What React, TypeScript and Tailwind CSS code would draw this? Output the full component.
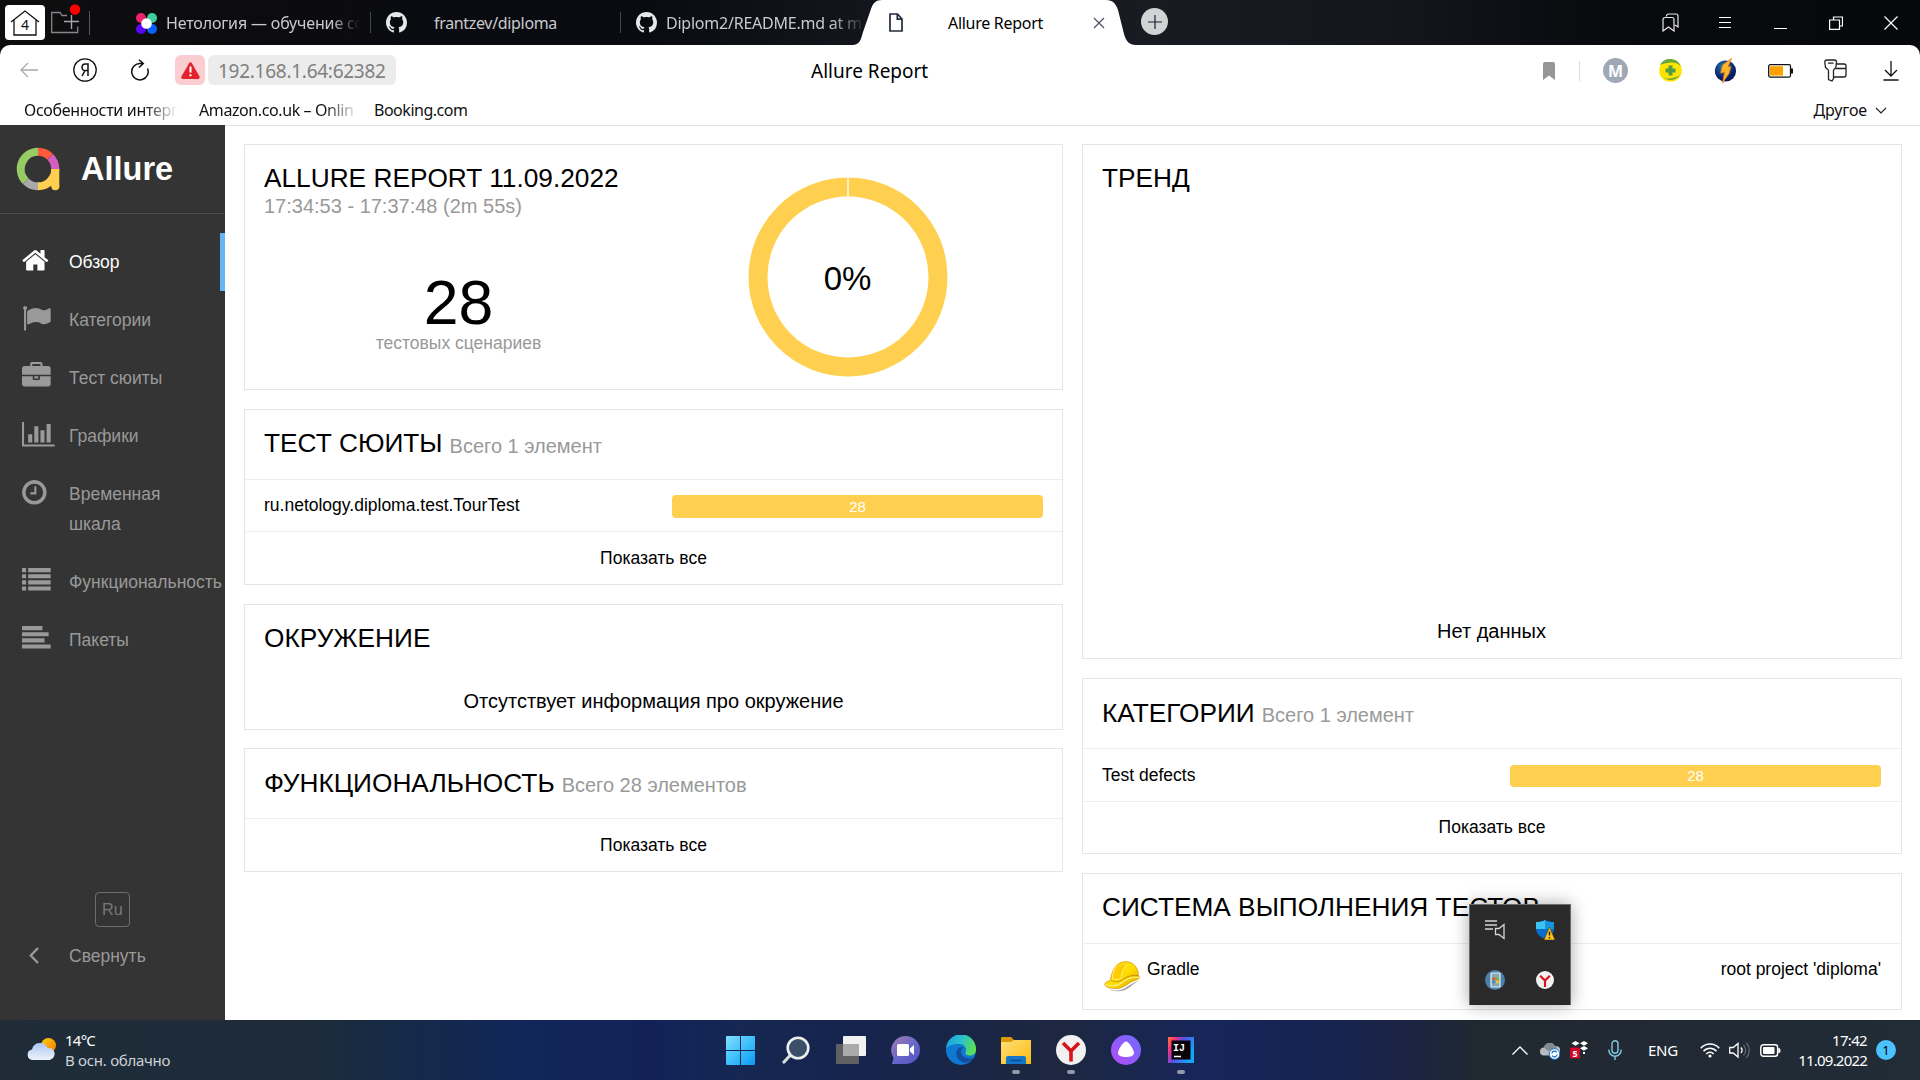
import React, { type ReactNode } from "react";

/* ---------- Browser chrome ---------- */

function GithubMark() {
  return (
    <svg width="21" height="21" viewBox="0 0 16 16" fill="#e6e7e8" className="shrink-0">
      <path d="M8 0C3.58 0 0 3.58 0 8c0 3.54 2.29 6.53 5.47 7.59.4.07.55-.17.55-.38 0-.19-.01-.82-.01-1.49-2.01.37-2.53-.49-2.69-.94-.09-.23-.48-.94-.82-1.13-.28-.15-.68-.52-.01-.53.63-.01 1.08.58 1.23.82.72 1.21 1.87.87 2.33.66.07-.52.28-.87.51-1.07-1.78-.2-3.64-.89-3.64-3.95 0-.87.31-1.59.82-2.15-.08-.2-.36-1.02.08-2.12 0 0 .67-.21 2.2.82.64-.18 1.32-.27 2-.27s1.36.09 2 .27c1.53-1.04 2.2-.82 2.2-.82.44 1.1.16 1.92.08 2.12.51.56.82 1.27.82 2.15 0 3.07-1.87 3.75-3.65 3.95.29.25.54.73.54 1.48 0 1.07-.01 1.93-.01 2.2 0 .21.15.46.55.38A8.01 8.01 0 0 0 16 8c0-4.42-3.58-8-8-8z" />
    </svg>
  );
}

function TabDivider({ className }: { className: string }) {
  return <span className={"h-[21px] w-px shrink-0 bg-[#45474c] " + className} />;
}

function TabBar() {
  return (
    <div className="flex h-[45px] items-center bg-[linear-gradient(90deg,#0e0d0e_0px,#0a0b10_420px,#090b11_640px,#12151b_860px,#181b22_1150px,#14161c_1400px,#090a0e_1600px,#07080b_1920px)] font-['Noto_Sans',sans-serif] text-[16px] leading-[22px] text-[#c9cacc]">
      <div className="ml-[5px] flex h-[35px] w-10 shrink-0 items-center justify-center rounded bg-white">
        <svg width="30" height="26" viewBox="0 0 30 26" fill="none" stroke="#111" strokeWidth="1.3">
          <path d="M1 12 15 1l14 11M4 10v15h22V10" />
          <text x="15" y="19.5" textAnchor="middle" fontSize="14" fill="#111" stroke="none">4</text>
        </svg>
      </div>
      <svg width="30" height="36" viewBox="0 0 30 36" fill="none" className="-mt-px ml-[6px] shrink-0">
        <path d="M16 11.500H11L9 8.500H.7v20h26v-6" stroke="#85868a" strokeWidth="1.3" />
        <path d="M13 17.500h15M20.500 11v14" stroke="#a6a7aa" strokeWidth="1.4" />
        <circle cx="24" cy="5.500" r="5.200" fill="#fe0000" />
      </svg>
      <span className="ml-[8px] h-6 w-px shrink-0 bg-[#56575c]" />

      <svg width="21" height="21" viewBox="0 0 21 21" className="ml-[46px] mt-px shrink-0">
        <circle cx="5" cy="5" r="5" fill="#e8236f" />
        <circle cx="16" cy="5" r="5" fill="#3ecf9a" />
        <circle cx="5" cy="16" r="5" fill="#5a06f5" />
        <circle cx="16" cy="16" r="5" fill="#0a62fc" />
        <circle cx="10.500" cy="10.500" r="5.300" fill="#fff" />
      </svg>
      <div className="ml-[9px] w-[194px] shrink-0 overflow-hidden whitespace-nowrap tracking-[-0.16px] [mask-image:linear-gradient(90deg,#000_165px,transparent)]">
        Нетология — обучение со
      </div>
      <TabDivider className="ml-[10px]" />
      <div className="ml-[15px] flex w-[234px] shrink-0 items-center">
        <GithubMark />
        <span className="ml-[27px] tracking-[-0.33px]">frantzev/diploma</span>
      </div>
      <TabDivider className="" />
      <div className="ml-[15px] flex w-[216px] shrink-0 items-center">
        <GithubMark />
        <span className="ml-[9px] w-[196px] shrink-0 overflow-hidden whitespace-nowrap tracking-[-0.23px] [mask-image:linear-gradient(90deg,#000_165px,transparent_200px)]">
          Diplom2/README.md at m
        </span>
      </div>

      <div className="relative flex h-[45px] w-[287px] shrink-0 items-center text-black">
        <svg width="287" height="45" viewBox="0 0 287 45" className="absolute inset-0">
          <path d="M0 45C8 45 9 39 11 32L19 9C21 3 24 0 30 0H254C261 0 264 4 266 10L272 34C274 41 277 45 284 45Z" fill="#fff" />
        </svg>
        <svg width="14" height="19" viewBox="0 0 14 19" fill="none" stroke="#222c3f" strokeWidth="1.700" className="relative ml-[37px] shrink-0">
          <path d="M1 1h7.500L13 6v12H1zM8.300 1v5.200H13" />
        </svg>
        <span className="relative ml-[45px] mt-px w-[95px] whitespace-nowrap tracking-[-0.29px]">Allure Report</span>
        <svg width="12" height="12" viewBox="0 0 12 12" stroke="#4a5160" strokeWidth="1.200" className="relative ml-[50px] mt-px">
          <path d="m1 1 10 10M11 1 1 11" />
        </svg>
      </div>
      <div className="-mt-[2px] ml-[2px] flex size-[27px] shrink-0 items-center justify-center rounded-full bg-[#d2d3d5]">
        <svg width="14" height="14" viewBox="0 0 14 14" stroke="#1c2030" strokeWidth="1.200">
          <path d="M7 0v14M0 7h14" />
        </svg>
      </div>

      <div className="ml-auto flex items-center pr-[22px]">
        <svg width="17" height="19" viewBox="0 0 17 19" fill="none" stroke="#e8e8ea" strokeWidth="1.200">
          <path d="M4.500 3.500V3a2 2 0 0 1 2-2H14a2 2 0 0 1 2 2v11l-3-2M1 18V6.500a2 2 0 0 1 2-2h7a2 2 0 0 1 2 2V18l-5.500-4z" />
        </svg>
        <svg width="12" height="13" viewBox="0 0 12 13" stroke="#fff" strokeWidth="1" className="ml-[40px]">
          <path d="M0 1.500h12M0 6.500h12M0 11.500h12" />
        </svg>
        <svg width="13" height="13" viewBox="0 0 13 13" stroke="#fff" strokeWidth="1" className="ml-[43px]">
          <path d="M0 12.500h13" />
        </svg>
        <svg width="14" height="14" viewBox="0 0 14 14" fill="none" stroke="#fff" strokeWidth="1.200" className="ml-[42px]">
          <path d="M4.500 4V1h9v9h-3M.6 4h9.900v9.400H.6z" />
        </svg>
        <svg width="14" height="14" viewBox="0 0 14 14" stroke="#fff" strokeWidth="1.200" className="ml-[41px]">
          <path d="m.5.5 13 13M13.500.5l-13 13" />
        </svg>
      </div>
    </div>
  );
}

function Toolbar() {
  return (
    <div className="grid h-[50px] grid-cols-[811px_1fr_auto] items-center rounded-t-[10px] bg-white font-['Noto_Sans',sans-serif] text-[19px] leading-[26px]">
      <div className="flex items-center">
        <svg width="18" height="16" viewBox="0 0 18 16" fill="none" stroke="#a9a9a9" strokeWidth="1.300" className="ml-[20px]">
          <path d="M18 8H1.500M8 1 1 8l7 7" />
        </svg>
        <svg width="24" height="24" viewBox="0 0 24 24" fill="none" stroke="#111" strokeWidth="1.300" className="ml-[35px]">
          <circle cx="12" cy="12" r="11.200" />
          <path d="M15 18V6h-2.500a3.300 3.300 0 0 0-.3 6.600H15M12 12.600 9 18" strokeWidth="1.500" />
        </svg>
        <svg width="19" height="22" viewBox="0 0 19 22" fill="none" stroke="#111" strokeWidth="1.500" className="ml-[33px]">
          <path d="M17.500 9.500A8.200 8.200 0 1 1 9.500 4.500h3M9 .8l4.300 3.700L9 8.500" />
        </svg>
        <div className="ml-[26px] flex h-[30px] w-[30px] items-center justify-center rounded-md bg-[#fbcdd0]">
          <svg width="19" height="17" viewBox="0 0 19 17">
            <path d="M8.200 1a1.500 1.500 0 0 1 2.600 0l7.600 13.300A1.700 1.700 0 0 1 17 17H2a1.700 1.700 0 0 1-1.400-2.700z" fill="#e2222d" />
            <path d="M9.500 4.500v6M9.500 12.200v2" stroke="#fff" strokeWidth="2" />
          </svg>
        </div>
        <div className="ml-[3px] flex h-[30px] w-[188px] items-center rounded-md bg-[#ececec] pl-[10px] pt-px tracking-[-0.27px] text-[#7f7f7f]">
          192.168.1.64:62382
        </div>
      </div>
      <div className="mt-px text-black">Allure Report</div>
      <div className="mt-px flex items-center pr-[21px]">
        <svg width="12" height="18" viewBox="0 0 12 18" className="mr-[24px]">
          <path d="M0 2a2 2 0 0 1 2-2h8a2 2 0 0 1 2 2v16l-6-4.500L0 18z" fill="#969696" />
        </svg>
        <span className="h-5 w-px bg-[#dcdcdc]" />
        <span className="ml-[23px] flex size-[25px] items-center justify-center rounded-full bg-[#9fa9b6] text-[16px] font-bold leading-none text-white">M</span>
        <svg width="23" height="23" viewBox="0 0 23 23" className="ml-[31px]">
          <circle cx="11.500" cy="11.500" r="11.300" fill="#ffe500" />
          <path d="M1 6A11.500 11.500 0 0 1 22 8C18 2 9 3 1 6ZM3 17c4 4 12 3 18-1A11.300 11.300 0 0 1 3 17Z" fill="#6aa83f" />
          <path d="M11.500 6.500v10M6.500 11.500h10" stroke="#4f9d44" strokeWidth="4" />
        </svg>
        <svg width="23" height="26" viewBox="0 0 23 26" className="ml-[32px]">
          <defs>
            <radialGradient id="boltBg" cx=".4" cy=".3" r=".8">
              <stop offset="0" stopColor="#1f7fb5" />
              <stop offset=".6" stopColor="#0a2670" />
              <stop offset="1" stopColor="#04104a" />
            </radialGradient>
          </defs>
          <circle cx="11.500" cy="13" r="10.600" fill="url(#boltBg)" />
          <path d="M17.500.5 8.500 7 6.500 15l4-.5L8.500 25l6.500-9.500 2-7-3 .5z" fill="#ffb52b" stroke="#e07a1c" strokeWidth=".8" />
        </svg>
        <svg width="25" height="14" viewBox="0 0 25 14" className="ml-[31px]">
          <rect x=".7" y=".7" width="21.800" height="12.400" rx="1.500" fill="#fff" stroke="#111" strokeWidth="1.300" />
          <rect x="2" y="2.200" width="13" height="9.400" fill="#ffa100" />
          <rect x="22.700" y="4.500" width="2.300" height="5" fill="#111" />
        </svg>
        <svg width="23" height="23" viewBox="0 0 23 23" fill="none" stroke="#222" strokeWidth="1.300" className="-mt-px ml-[31px]">
          <path d="M2.500 1h8a2 2 0 0 1 2 2l-.6 5c-.2 1.500-2.400 2-2.400 3.500v8L8 22l-3.500-1.500v-9C4.500 10 1.700 9.500 1.400 8L.8 3a2 2 0 0 1 1.700-2zM4 4.200h5.500" />
          <path d="M12.500 5H20a2 2 0 0 1 2 2v9a2 2 0 0 1-2 2H9.800M11.500 9.500H22" />
        </svg>
        <svg width="16" height="20" viewBox="0 0 16 20" fill="none" stroke="#111" strokeWidth="1.300" className="ml-[36px]">
          <path d="M8 0v15M2 9l6 6 6-6M.5 19h15" />
        </svg>
      </div>
    </div>
  );
}

function BookmarkBar() {
  return (
    <div className="flex h-[31px] items-center border-b border-[#e2e2e2] bg-white font-['Noto_Sans',sans-serif] text-[16px] leading-[22px] text-[#111]">
      <span className="ml-[24px] w-[154px] overflow-hidden whitespace-nowrap tracking-[-0.29px] [mask-image:linear-gradient(90deg,#000_120px,transparent)]">
        Особенности интерп
      </span>
      <span className="ml-[21px] w-[158px] overflow-hidden whitespace-nowrap tracking-[-0.4px] [mask-image:linear-gradient(90deg,#000_125px,transparent_160px)]">
        Amazon.co.uk – Onlin
      </span>
      <span className="ml-[17px] tracking-[-0.48px]">Booking.com</span>
      <span className="ml-auto tracking-[-0.12px]">Другое</span>
      <svg width="12" height="7" viewBox="0 0 12 7" fill="none" stroke="#222" strokeWidth="1.200" className="ml-[8px] mr-[33px]">
        <path d="m1 1 5 5 5-5" />
      </svg>
    </div>
  );
}

/* ---------- Sidebar ---------- */

const icons: Record<string, { d: string; w: number; ml: string }> = {
  home: {
    w: 1792,
    ml: "ml-[21px]",
    d: "M1472 992v480q0 26-19 45t-45 19h-384v-384h-256v384h-384q-26 0-45-19t-19-45v-480q0-1 .5-3t.5-3l575-474 575 474q1 2 1 6zm223-69l-62 74q-8 9-21 11h-3q-13 0-21-7l-692-577-692 577q-12 8-24 7-13-2-21-11l-62-74q-8-10-7-23.5t11-21.500l719-599q32-26 76-26t76 26l244 204v-195q0-14 9-23t23-9h192q14 0 23 9t9 23v408l219 182q10 8 11 21.500t-7 23.500z",
  },
  flag: {
    w: 1792,
    ml: "ml-[22px]",
    d: "M320 256q0 72-64 110v1266q0 13-9.500 22.500t-22.500 9.500h-64q-13 0-22.500-9.500t-9.500-22.500v-1266q-64-38-64-110 0-53 37.500-90.500t90.500-37.500 90.500 37.500 37.500 90.500zm1472 64v763q0 25-12.500 38.500t-39.500 27.500q-215 116-369 116-61 0-123.500-22t-108.500-48-115.500-48-142.500-22q-192 0-464 146-17 9-33 9-26 0-45-19t-19-45v-742q0-32 31-55 21-14 79-43 236-120 421-120 107 0 200 29t219 88q38 19 88 19 54 0 117.500-21t110-47 88-47 54.500-21q26 0 45 19t19 45z",
  },
  briefcase: {
    w: 1792,
    ml: "ml-[22px]",
    d: "M640 256h512v-128h-512v128zm1152 640v480q0 66-47 113t-113 47h-1472q-66 0-113-47t-47-113v-480h672v160q0 26 19 45t45 19h320q26 0 45-19t19-45v-160h672zm-768 0v128h-256v-128h256zm768-480v384h-1792v-384q0-66 47-113t113-47h352v-160q0-40 28-68t68-28h576q40 0 68 28t28 68v160h352q66 0 113 47t47 113z",
  },
  chart: {
    w: 2048,
    ml: "ml-[22px]",
    d: "M640 896v512h-256v-512h256zm384-512v1024h-256v-1024h256zm1024 1152v128h-2048v-1536h128v1408h1920zm-640-896v768h-256v-768h256zm384-384v1152h-256v-1152h256z",
  },
  clock: {
    w: 1792,
    ml: "ml-[20px]",
    d: "M1024 544v448q0 14-9 23t-23 9h-320q-14 0-23-9t-9-23v-64q0-14 9-23t23-9h224v-352q0-14 9-23t23-9h64q14 0 23 9t9 23zm416 352q0-148-73-273t-198-198-273-73-273 73-198 198-73 273 73 273 198 198 273 73 273-73 198-198 73-273zm224 0q0 209-103 385.500t-279.500 279.500-385.500 103-385.500-103-279.500-279.500-103-385.500 103-385.500 279.500-279.500 385.500-103 385.500 103 279.500 279.500 103 385.500z",
  },
  list: {
    w: 1792,
    ml: "ml-[22px]",
    d: "M0 128h256v256H0zM384 128h1408v256H384zM0 512h256v256H0zM384 512h1408v256H384zM0 896h256v256H0zM384 896h1408v256H384zM0 1280h256v256H0zM384 1280h1408v256H384z",
  },
  align: {
    w: 1792,
    ml: "ml-[22px]",
    d: "M0 128h1280v256H0zM0 512h1664v256H0zM0 896h1408v256H0zM0 1280h1792v256H0z",
  },
};

function NavItem({ icon, active, children }: { icon: string; active?: boolean; children: ReactNode }) {
  const g = icons[icon];
  return (
    <div className={"flex items-start " + (active ? "border-r-[5px] border-[#64b5f6] text-white" : "text-[#999]")}>
      <span className="flex w-[69px] shrink-0 pt-[13px]">
        <svg width={g.w * 0.016} height="28.670" viewBox={`0 0 ${g.w} 1792`} fill="currentColor" className={g.ml}>
          <path d={g.d} />
        </svg>
      </span>
      <span className="py-[14px] text-[17.5px] leading-[30px]">{children}</span>
    </div>
  );
}

function Sidebar() {
  return (
    <aside className="flex w-[225px] shrink-0 flex-col bg-[#343434] font-['Liberation_Sans',sans-serif]">
      <div className="flex h-[89px] items-start border-b border-[#4d4d4d]">
        <svg width="46" height="46" viewBox="0 0 46 46" fill="none" strokeWidth="8" className="ml-[15px] mt-[21px]">
          <path d="M23 5.700A17.300 17.300 0 0 0 10.800 35.200" stroke="#97cc64" />
          <path d="M10.800 35.200A17.300 17.300 0 0 0 23 40.300" stroke="#aaa" />
          <path d="M23 40.300A17.300 17.300 0 0 0 40.300 23" stroke="#ffd050" />
          <path d="M23 5.700A17.300 17.300 0 0 1 35.200 10.800" stroke="#fd5a3e" />
          <path d="M35.200 10.800A17.300 17.300 0 0 1 40.300 23" stroke="#d35ebe" />
          <path d="M40.300 23v17.500" stroke="#ffd050" />
          <circle cx="40.300" cy="40.300" r="4" fill="#ffd050" stroke="none" />
        </svg>
        <span className="ml-[20px] mt-[24px] text-[32.5px] font-bold leading-[40px] text-white">Allure</span>
      </div>
      <nav className="mt-[19px] flex flex-col">
        <NavItem icon="home" active>Обзор</NavItem>
        <NavItem icon="flag">Категории</NavItem>
        <NavItem icon="briefcase">Тест сюиты</NavItem>
        <NavItem icon="chart">Графики</NavItem>
        <NavItem icon="clock">Временная<br />шкала</NavItem>
        <NavItem icon="list">Функциональность</NavItem>
        <NavItem icon="align">Пакеты</NavItem>
      </nav>
      <div className="mt-auto flex flex-col pb-[49px]">
        <span className="flex h-[35px] w-[35px] items-center justify-center self-center rounded-[4px] border border-[#6e6e6e] text-[16.250px] text-[#777]">Ru</span>
        <div className="mt-[14px] flex h-[30px] items-center text-[17.5px] leading-[30px] text-[#999]">
          <svg width="10" height="17" viewBox="0 0 10 17" fill="none" stroke="currentColor" strokeWidth="2.400" className="-mt-[2px] ml-[29px] mr-[30px]">
            <path d="M9 1 1.800 8.500 9 16" />
          </svg>
          Свернуть
        </div>
      </div>
    </aside>
  );
}

/* ---------- Widgets ---------- */

function Card({ className, children }: { className: string; children: ReactNode }) {
  return <section className={"flex flex-col border border-[#e5e5e5] bg-white " + className}>{children}</section>;
}

function Title({ sub, low, children }: { sub?: string; low?: boolean; children: string }) {
  return (
    <h2 className={"flex h-[69px] shrink-0 items-start whitespace-nowrap px-[19px] text-[26.250px] leading-[30px] " + (low ? "pt-[19px]" : "pt-[18px]")}>
      <span>{children}</span>
      {sub && <small className={"ml-[7px] text-[20px] leading-[30px] text-[#999] " + (low ? "pt-[2px]" : "pt-[3px]")}>{sub}</small>}
    </h2>
  );
}

function BarRow({ name, value, low }: { name: string; value: number; low?: boolean }) {
  return (
    <div className={"flex items-start justify-between border-t border-[#eceff1] px-[19px] " + (low ? "h-[53px] pt-px" : "h-[52px]")}>
      <span className="mt-[10px] text-[17.5px] leading-[30px]">{name}</span>
      <span className={"mt-[15px] flex w-[371px] items-center justify-center rounded-[4px] bg-[#ffd050] text-[15px] leading-[22px] text-white " + (low ? "h-[22px]" : "h-[23px]")}>
        {value}
      </span>
    </div>
  );
}

function ShowAll({ className }: { className: string }) {
  return <div className={"flex-1 border-t border-[#eceff1] text-center text-[17.5px] leading-[30px] " + className}>Показать все</div>;
}

function LeftColumn() {
  return (
    <div className="flex w-[819px] flex-col gap-[19px]">
      <Card className="h-[246px]">
        <div className="flex h-full">
          <div className="flex w-[408px] flex-col">
            <h2 className="whitespace-nowrap pl-[19px] pt-[18px] text-[26.250px] leading-[30px]">ALLURE REPORT 11.09.2022</h2>
            <div className="mt-px pl-[19px] text-[20px] leading-[24px] text-[#999]">17:34:53 - 17:37:48 (2m 55s)</div>
            <div className="mt-[56px] pl-[19px] text-center text-[62.5px] leading-[56px]">28</div>
            <div className="mt-px pl-[19px] text-center text-[17.5px] leading-[24px] text-[#999]">тестовых сценариев</div>
          </div>
          <svg width="200" height="200" viewBox="0 0 200 200" className="ml-[95px] mt-[32px]">
            <circle cx="100" cy="100" r="90" fill="none" stroke="#ffd050" strokeWidth="19" />
            <path d="M100 0v20.500" stroke="#fff" strokeWidth="1.300" />
            <text x="99.500" y="113" textAnchor="middle" fontSize="33">0%</text>
          </svg>
        </div>
      </Card>
      <Card className="h-[176px]">
        <Title sub="Всего 1 элемент">ТЕСТ СЮИТЫ</Title>
        <BarRow name="ru.netology.diploma.test.TourTest" value={28} />
        <ShowAll className="pt-[11px]" />
      </Card>
      <Card className="h-[126px]">
        <Title>ОКРУЖЕНИЕ</Title>
        <div className="pt-[12px] text-center text-[20px] leading-[30px]">Отсутствует информация про окружение</div>
      </Card>
      <Card className="-mt-px h-[124px]">
        <Title low sub="Всего 28 элементов">ФУНКЦИОНАЛЬНОСТЬ</Title>
        <ShowAll className="pt-[11px]" />
      </Card>
    </div>
  );
}

function Helmet() {
  return (
    <svg width="38" height="32" viewBox="0 0 38 32" className="shrink-0">
      <defs>
        <linearGradient id="hat" x1="0" y1="0" x2="1" y2="1">
          <stop offset="0" stopColor="#ffd428" />
          <stop offset=".5" stopColor="#ffe000" />
          <stop offset="1" stopColor="#e29e00" />
        </linearGradient>
      </defs>
      <path d="M4 27c6 4 14 3 20-2l11-6-9 7c-6 5-16 6-22 1z" fill="#8d8d8d" opacity=".8" />
      <path d="M.8 23C1.500 20.500 5 21 6.500 18.500 8 10 11.500 3 18 1.200 26-.8 32 3 34 11c.4 2 .3 4 1.500 5.500-.3 2-4 2-9.500 5C21 25 17 28 11 27.500 6 27 .5 26 .8 23z" fill="url(#hat)" stroke="#d59a00" strokeWidth=".8" />
      <path d="M1.500 23.500C7 25.500 13 25.500 18 21.500c5-4 10-6 17-5" fill="none" stroke="#fff07a" strokeWidth="1.300" />
      <path d="M13 5c-3.500 4-4.500 8-4.500 12.500 3 1.500 6 1.500 9-.5 0-5 1.500-10 6-13.500" fill="#ffc400" fillOpacity=".7" stroke="#fff07a" strokeWidth="1" />
      <path d="M7 19.500c5 2 9 1 13-1.800 4-2.700 8-3.700 14-3.200" fill="none" stroke="#c98b00" strokeWidth=".9" />
    </svg>
  );
}

function RightColumn() {
  return (
    <div className="flex w-[820px] flex-col gap-[19px]">
      <Card className="h-[515px]">
        <Title>ТРЕНД</Title>
        <div className="mt-auto pb-[12px] pr-px text-center text-[20px] leading-[30px]">Нет данных</div>
      </Card>
      <Card className="h-[176px]">
        <Title low sub="Всего 1 элемент">КАТЕГОРИИ</Title>
        <div className="pr-px">
          <BarRow low name="Test defects" value={28} />
        </div>
        <ShowAll className="pt-[10px]" />
      </Card>
      <Card className="h-[137px]">
        <Title>СИСТЕМА ВЫПОЛНЕНИЯ ТЕСТОВ</Title>
        <div className="flex flex-1 items-start border-t border-[#eceff1] pl-[19px] pr-[20px] pt-[10px] text-[17.5px] leading-[30px]">
          <div className="ml-[2px] mt-[7px]">
            <Helmet />
          </div>
          <span className="ml-[5px]">Gradle</span>
          <span className="ml-auto">root project 'diploma'</span>
        </div>
      </Card>
    </div>
  );
}

/* ---------- Desktop ---------- */

function YandexY({ size }: { size: number }) {
  return (
    <svg width={size} height={size} viewBox="0 0 30 30">
      <circle cx="15" cy="15" r="15" fill="#f1f1f2" />
      <path d="M7 8l8 8 8-8M15 15.500V26.500" fill="none" stroke="#d8131b" strokeWidth="3.600" />
    </svg>
  );
}

function TrayPopup() {
  return (
    <div className="absolute left-[1469px] top-[904px] grid h-[101px] w-[102px] grid-cols-2 grid-rows-2 place-items-center border border-[#6b6b6b] border-b-0 bg-[#2a2a2a] shadow-[0_0_16px_rgba(0,0,0,0.35)]">
      <svg width="20" height="20" viewBox="0 0 20 20" fill="none" stroke="#d5d5d5" strokeWidth="1.300">
        <path d="M0 1h12M0 5h12M0 9h8M10.500 8.500h3.500l5-4v14l-5-4h-3.500z" />
      </svg>
      <svg width="20" height="20" viewBox="0 0 20 20">
        <path d="M10 0c2 1.500 5 2 9 2v6c0 6-4 9-9 11-5-2-9-5-9-11V2c4 0 7-.5 9-2z" fill="#0a6cc9" />
        <path d="M10 0v9H1V2c4 0 7-.5 9-2z" fill="#3cc4f5" />
        <path d="M10 0v9h9V2c-4 0-7-.5-9-2z" fill="#1793e0" />
        <path d="M14.500 7 20 20H9z" fill="#ffc21a" stroke="#3a2c00" strokeWidth=".5" />
        <path d="M14.500 11.500v4M14.500 17v1.500" stroke="#222" strokeWidth="1.400" />
      </svg>
      <svg width="20" height="20" viewBox="0 0 20 20">
        <circle cx="10" cy="10" r="10" fill="#4c80a8" />
        <rect x="6" y="3" width="9" height="14" rx="1" fill="#85a9b8" stroke="#e8f0f2" strokeWidth="1.200" />
        <path d="M7.300 7.500h3v2.700h-3z" fill="#e8502a" />
        <path d="M10.700 7.500h3v2.700h-3z" fill="#7ab51d" />
        <path d="M7.300 10.600h3v2.700h-3z" fill="#2a8fe0" />
        <path d="M10.700 10.600h3v2.700h-3z" fill="#ffbf1a" />
      </svg>
      <YandexY size={18} />
    </div>
  );
}

function AppButton({ open, children }: { open?: boolean; children: ReactNode }) {
  return (
    <div className="flex h-[60px] w-[55px] flex-col items-center">
      <div className="mt-[15px] flex h-[30px] items-center">{children}</div>
      {open && <span className="mt-[5px] h-1 w-2 rounded-full bg-[#9499a8]" />}
    </div>
  );
}

function Taskbar() {
  return (
    <div className="grid h-[60px] grid-cols-[713px_495px_1fr] bg-[linear-gradient(90deg,#1f2c38_0px,#1e2c3a_310px,#152a47_400px,#12265a_520px,#122259_650px,#152752_740px,#16244d_860px,#1d2740_1060px,#16265a_1210px,#162350_1330px,#1c2440_1420px,#20292f_1480px,#222934_1620px,#202c36_1920px)] font-['Noto_Sans',sans-serif] text-[15px] leading-5 text-white">
      <div className="flex items-center">
        <svg width="30" height="24" viewBox="0 0 30 24" className="-mt-[3px] ml-[27px]">
          <defs>
            <linearGradient id="sun" x1="0" y1="0" x2="1" y2="1">
              <stop offset="0" stopColor="#ffcf10" />
              <stop offset="1" stopColor="#f07800" />
            </linearGradient>
            <linearGradient id="cloud" x1="0" y1="0" x2="0" y2="1">
              <stop offset="0" stopColor="#a9c8f5" />
              <stop offset="1" stopColor="#edf2f8" />
            </linearGradient>
          </defs>
          <circle cx="21.500" cy="8.500" r="7.500" fill="url(#sun)" />
          <path d="M5.500 23a5.300 5.300 0 0 1-.5-10.500A8.300 8.300 0 0 1 20.700 11 6 6 0 1 1 22.500 23z" fill="url(#cloud)" />
        </svg>
        <div className="ml-[8px] flex flex-col">
          <span className="tracking-[-0.75px]">14°C</span>
          <span className="tracking-[-0.28px] text-[#cdd2d7]">В осн. облачно</span>
        </div>
      </div>

      <div className="flex">
        <AppButton>
          <svg width="29" height="29" viewBox="0 0 29 29">
            <defs>
              <linearGradient id="win" x1="0" y1="0" x2="1" y2="1">
                <stop offset="0" stopColor="#84e0fd" />
                <stop offset=".5" stopColor="#3fc0fb" />
                <stop offset="1" stopColor="#0c9af5" />
              </linearGradient>
            </defs>
            <path d="M0 1q0-1 1-1h13v14H0zM15 0h13q1 0 1 1v13H15zM0 15h14v14H1q-1 0-1-1zM15 15h14v13q0 1-1 1H15z" fill="url(#win)" />
          </svg>
        </AppButton>
        <AppButton>
          <svg width="28" height="28" viewBox="0 0 28 28">
            <path d="m2 26 7-7.500" stroke="#d9dcdf" strokeWidth="3.200" strokeLinecap="round" />
            <circle cx="16" cy="12" r="10.300" fill="#3d4e69" stroke="#eceeef" strokeWidth="2.600" />
          </svg>
        </AppButton>
        <AppButton>
          <svg width="30" height="28" viewBox="0 0 30 28">
            <rect x="7" y="0" width="23" height="20" rx="1" fill="#f1f1f1" />
            <rect x="0" y="8" width="23" height="20" rx="1" fill="#5f6062" />
            <path d="M7 8h16v12H7z" fill="#a9aaab" />
          </svg>
        </AppButton>
        <AppButton>
          <svg width="29" height="29" viewBox="0 0 29 29">
            <defs>
              <linearGradient id="chat" x1="0" y1="0" x2="1" y2="1">
                <stop offset="0" stopColor="#a77bb0" />
                <stop offset=".5" stopColor="#6869c9" />
                <stop offset="1" stopColor="#4f50c0" />
              </linearGradient>
            </defs>
            <path d="M14.500 0a14.500 14 0 0 1 0 28H1l1.500-6A14.300 14.300 0 0 1 14.500 0z" fill="url(#chat)" />
            <rect x="6" y="8" width="12" height="12" rx="1.500" fill="#fff" />
            <path d="m19 12.500 4-3.500v10l-4-3.500z" fill="#fff" />
          </svg>
        </AppButton>
        <AppButton>
          <svg width="30" height="30" viewBox="0 0 30 30">
            <defs>
              <linearGradient id="edgeTop" x1="0" y1=".3" x2="1" y2=".6">
                <stop offset="0" stopColor="#1b9fe2" />
                <stop offset=".5" stopColor="#2cc4c4" />
                <stop offset="1" stopColor="#62e04c" />
              </linearGradient>
            </defs>
            <circle cx="15" cy="15" r="15" fill="#0f78d0" />
            <path d="M0 14A15 15 0 0 1 30 14.500c0 4-3 6-6.500 6-3 0-5-1.500-4-3C21 15 20 9 13 9 6 9 1 11 0 14z" fill="url(#edgeTop)" />
            <path d="M12.500 13c-4 4-3 12 5 14.500 4 .8 8-1.500 10.500-5-4 2-13 1-13-6 0-2 1-3 2.500-4-2-.5-4-.5-5 .5z" fill="#124f9e" />
          </svg>
        </AppButton>
        <AppButton open>
          <svg width="30" height="27" viewBox="0 0 30 27">
            <defs>
              <linearGradient id="folder" x1="0" y1="0" x2="1" y2="1">
                <stop offset="0" stopColor="#ffe07a" />
                <stop offset="1" stopColor="#fbb90f" />
              </linearGradient>
            </defs>
            <path d="M0 1q0-1 1-1h9l3 3h0v6H0z" fill="#dc9a06" />
            <path d="M0 5h10l3-2h17v24H0z" fill="url(#folder)" />
            <path d="M5 27v-6q0-2 2-2h16q2 0 2 2v6z" fill="#1476c8" />
            <path d="M9.500 23.500h11" stroke="#0c4f93" strokeWidth="1.500" />
          </svg>
        </AppButton>
        <AppButton open>
          <YandexY size={30} />
        </AppButton>
        <AppButton>
          <svg width="30" height="30" viewBox="0 0 30 30">
            <defs>
              <linearGradient id="alice" x1="1" y1="0" x2="0" y2="1">
                <stop offset="0" stopColor="#6d6bff" />
                <stop offset="1" stopColor="#b34cf8" />
              </linearGradient>
            </defs>
            <circle cx="15" cy="15" r="15" fill="url(#alice)" />
            <path d="M15 6.500c3 0 8 8.500 8 11.500S19 22 15 22s-8-1-8-4 5-11.500 8-11.500z" fill="#fff" />
          </svg>
        </AppButton>
        <AppButton open>
          <svg width="26" height="26" viewBox="0 0 26 26">
            <defs>
              <linearGradient id="idea" x1="0" y1="0" x2="1" y2=".5">
                <stop offset="0" stopColor="#ff7a2c" />
                <stop offset=".25" stopColor="#f5317f" />
                <stop offset=".5" stopColor="#5c4fe8" />
                <stop offset="1" stopColor="#12a6f5" />
              </linearGradient>
            </defs>
            <rect width="26" height="26" fill="url(#idea)" />
            <rect x="3.500" y="3.500" width="19" height="19" fill="#0a0209" />
            <text x="5" y="14" fontSize="10" fontWeight="700" fill="#fff" fontFamily="Liberation Mono">IJ</text>
            <path d="M6 19.500h7" stroke="#fff" strokeWidth="1.500" />
          </svg>
        </AppButton>
      </div>

      <div className="flex items-center justify-end pr-[24px]">
        <svg width="16" height="9" viewBox="0 0 16 9" fill="none" stroke="#fff" strokeWidth="1.300">
          <path d="m.5 8.500 7.500-7.500 7.500 7.500" />
        </svg>
        <svg width="20" height="18" viewBox="0 0 20 18" className="ml-[12px] mt-[2px]">
          <path d="M4 13.500a4 4 0 0 1 0-8 6 6 0 0 1 11-1.500 4.500 4.500 0 0 1 1.500 9.500z" fill="#b9bcbf" />
          <path d="M4 5.500a6 6 0 0 1 11-1.500 4.500 4.500 0 0 1 2 1.500L8 9z" fill="#85898c" />
          <circle cx="14.500" cy="12" r="5.300" fill="#fff" stroke="#1472c9" strokeWidth="1" />
          <path d="M11.800 11.500a2.800 2.800 0 0 1 5-1.200M17.200 12.500a2.800 2.800 0 0 1-5 1.200" fill="none" stroke="#1472c9" strokeWidth="1.300" />
        </svg>
        <svg width="19" height="18" viewBox="0 0 19 18" className="ml-[10px]">
          <path d="m5.500 0 4 2.300-4 2.500-4-2.500zM14 0l4 2.300-4 2.500-4-2.500zM14 5l4 2.300-4 2.500-4-2.500zM13 11h2v2h-2z" fill="#fff" />
          <rect x="0" y="6.500" width="10" height="11" rx="1.500" fill="#d2062a" />
          <text x="5" y="15.500" textAnchor="middle" fontSize="9" fontWeight="700" fill="#fff">5</text>
        </svg>
        <svg width="14" height="20" viewBox="0 0 14 20" fill="none" stroke="#7fcbe0" strokeWidth="1.400" className="ml-[19px]">
          <rect x="4" y=".8" width="6" height="12.500" rx="3" />
          <path d="M.8 9.500c0 9 12.400 9 12.400 0M7 16.200V20" />
        </svg>
        <span className="ml-[26px] tracking-[-0.22px]">ENG</span>
        <svg width="20" height="15" viewBox="0 0 20 15" fill="none" stroke="#fff" strokeWidth="1.400" className="ml-[22px]">
          <path d="M.7 5.300c5-5.700 13.600-5.700 18.600 0M3.500 8.200c3.600-4 9.400-4 13 0M6.300 11c2-2.300 5.400-2.300 7.400 0" />
          <circle cx="10" cy="13" r="1.600" fill="#fff" stroke="none" />
        </svg>
        <svg width="21" height="17" viewBox="0 0 21 17" fill="none" stroke="#fff" strokeWidth="1.300" className="ml-[9px]">
          <path d="M.7 5.500h3.500L9 1.500v13.500l-4.800-4H.7zM11.800 5.500a4 4 0 0 1 0 5.500" />
          <path d="M14.500 3a7.500 7.500 0 0 1 0 10.500M17.300.8a11 11 0 0 1 0 15" stroke="#5d656d" />
        </svg>
        <svg width="21" height="13" viewBox="0 0 21 13" className="ml-[10px]">
          <rect x=".8" y=".8" width="16.800" height="11.400" rx="2.500" fill="none" stroke="#fff" strokeWidth="1.400" />
          <rect x="3" y="3" width="11.500" height="7" rx=".8" fill="#fff" />
          <path d="M18.300 4h.8q1.400 0 1.400 2.500T19.100 9h-.8z" fill="#fff" />
        </svg>
        <div className="ml-[17px] flex w-[69px] flex-col items-end">
          <span className="tracking-[-0.67px]">17:42</span>
          <span className="tracking-[-0.8px]">11.09.2022</span>
        </div>
        <span className="ml-[9px] flex size-5 items-center justify-center rounded-full bg-[#4cc2ff] text-[13px] leading-none text-black">1</span>
      </div>
    </div>
  );
}

export default function App() {
  return (
    <div className="relative flex h-[1080px] w-[1920px] flex-col overflow-hidden bg-[#0a0b10]">
      <TabBar />
      <Toolbar />
      <BookmarkBar />
      <div className="flex min-h-0 flex-1 bg-white">
        <div className="-mt-px flex">
          <Sidebar />
        </div>
        <main className="flex flex-1 items-start gap-[19px] pl-[19px] pt-[18px] font-['Liberation_Sans',sans-serif] text-black">
          <LeftColumn />
          <RightColumn />
        </main>
      </div>
      <Taskbar />
      <TrayPopup />
    </div>
  );
}
